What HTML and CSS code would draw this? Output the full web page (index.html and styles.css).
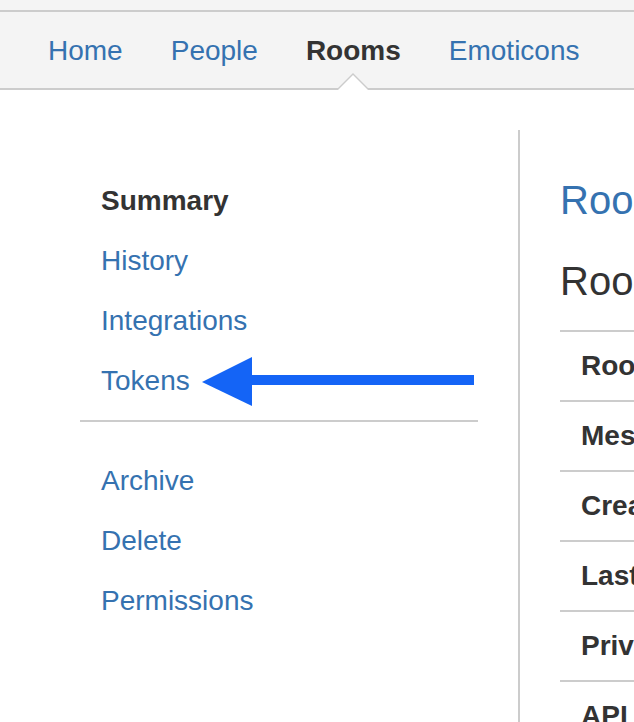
FILE: index.html
```html
<!DOCTYPE html>
<html lang="en">
<head>
<meta charset="utf-8">
<title>Rooms</title>
<link rel="stylesheet" href="styles.css">
</head>
<body>
<div class="topstrip"></div>
<nav class="nav">
  <a class="nav-item" href="#">Home</a>
  <a class="nav-item" href="#">People</a>
  <a class="nav-item active" href="#">Rooms</a>
  <a class="nav-item" href="#">Emoticons</a>
</nav>
<div class="page">
  <aside class="sidebar">
    <ul class="menu">
      <li class="menu-item current">Summary</li>
      <li class="menu-item"><a href="#">History</a></li>
      <li class="menu-item"><a href="#">Integrations</a></li>
      <li class="menu-item"><a href="#">Tokens</a></li>
    </ul>
    <hr class="sep">
    <ul class="menu">
      <li class="menu-item"><a href="#">Archive</a></li>
      <li class="menu-item"><a href="#">Delete</a></li>
      <li class="menu-item"><a href="#">Permissions</a></li>
    </ul>
  </aside>
  <main class="content">
    <a class="room-title" href="#">Room name</a>
    <h2 class="section-title">Room details</h2>
    <div class="details">
      <div class="row">Room name</div>
      <div class="row">Messages</div>
      <div class="row">Created</div>
      <div class="row">Last active</div>
      <div class="row">Privacy</div>
      <div class="row">API ID</div>
    </div>
  </main>
</div>
<svg class="arrow" width="634" height="722" viewBox="0 0 634 722">
  <polygon points="202,382 252,357 252,406" fill="#1464f6"/>
  <rect x="248" y="375" width="226" height="10" fill="#1464f6"/>
</svg>
</body>
</html>
```
FILE: styles.css
```css
html, body {
  margin: 0;
  padding: 0;
  overflow: hidden;
  background: #ffffff;
}
body {
  font-family: "Liberation Sans", Arial, Helvetica, sans-serif;
  color: #333333;
  width: 634px;
  height: 722px;
  position: relative;
}
a {
  color: #3572b0;
  text-decoration: none;
}
.topstrip {
  height: 10px;
  background: #f4f4f4;
}
.nav {
  display: flex;
  height: 76px;
  padding-left: 24px;
  background: #f4f4f4;
  border-top: 2px solid #cccccc;
  border-bottom: 2px solid #cccccc;
}
.nav-item {
  position: relative;
  padding: 1px 24px 0 24px;
  font-size: 28px;
  line-height: 75px;
  color: #3572b0;
}
.nav-item.active {
  color: #333333;
  font-weight: bold;
}
.nav-item.active::before,
.nav-item.active::after {
  content: "";
  position: absolute;
  left: 50%;
  width: 0;
  height: 0;
  border-style: solid;
}
.nav-item.active::before {
  bottom: -2px;
  margin-left: -17px;
  border-width: 0 17px 17px 17px;
  border-color: transparent transparent #cccccc transparent;
}
.nav-item.active::after {
  bottom: -2px;
  margin-left: -15px;
  border-width: 0 15px 15px 15px;
  border-color: transparent transparent #ffffff transparent;
}
.page {
  display: flex;
  margin-top: 40px;
  align-items: stretch;
}
.sidebar {
  flex: none;
  width: 398px;
  padding: 41px 0 0 80px;
  margin-right: 40px;
}
.menu {
  list-style: none;
  margin: 0;
  padding: 0;
}
.menu-item {
  font-size: 28px;
  line-height: 60px;
  height: 60px;
  padding-left: 21px;
}
.menu-item.current {
  font-weight: bold;
  color: #333333;
}
.sep {
  margin: 9px 0 29px 0;
  border: 0;
  border-top: 2px solid #cccccc;
  height: 0;
}
.content {
  flex: none;
  width: 560px;
  border-left: 2px solid #cccccc;
  padding: 40px 0 40px 40px;
}
.room-title {
  display: block;
  font-size: 40px;
  line-height: 60px;
  height: 60px;
  white-space: nowrap;
}
.section-title {
  margin: 20px 0 0 0;
  font-size: 40px;
  font-weight: normal;
  line-height: 62px;
  color: #333333;
  white-space: nowrap;
}
.details {
  margin-top: 18px;
  border-top: 2px solid #cccccc;
}
.row {
  height: 68px;
  line-height: 68px;
  padding-left: 21px;
  font-size: 28px;
  font-weight: bold;
  color: #333333;
  border-bottom: 2px solid #cccccc;
  white-space: nowrap;
}
.arrow {
  position: absolute;
  left: 0;
  top: 0;
  pointer-events: none;
}
```
